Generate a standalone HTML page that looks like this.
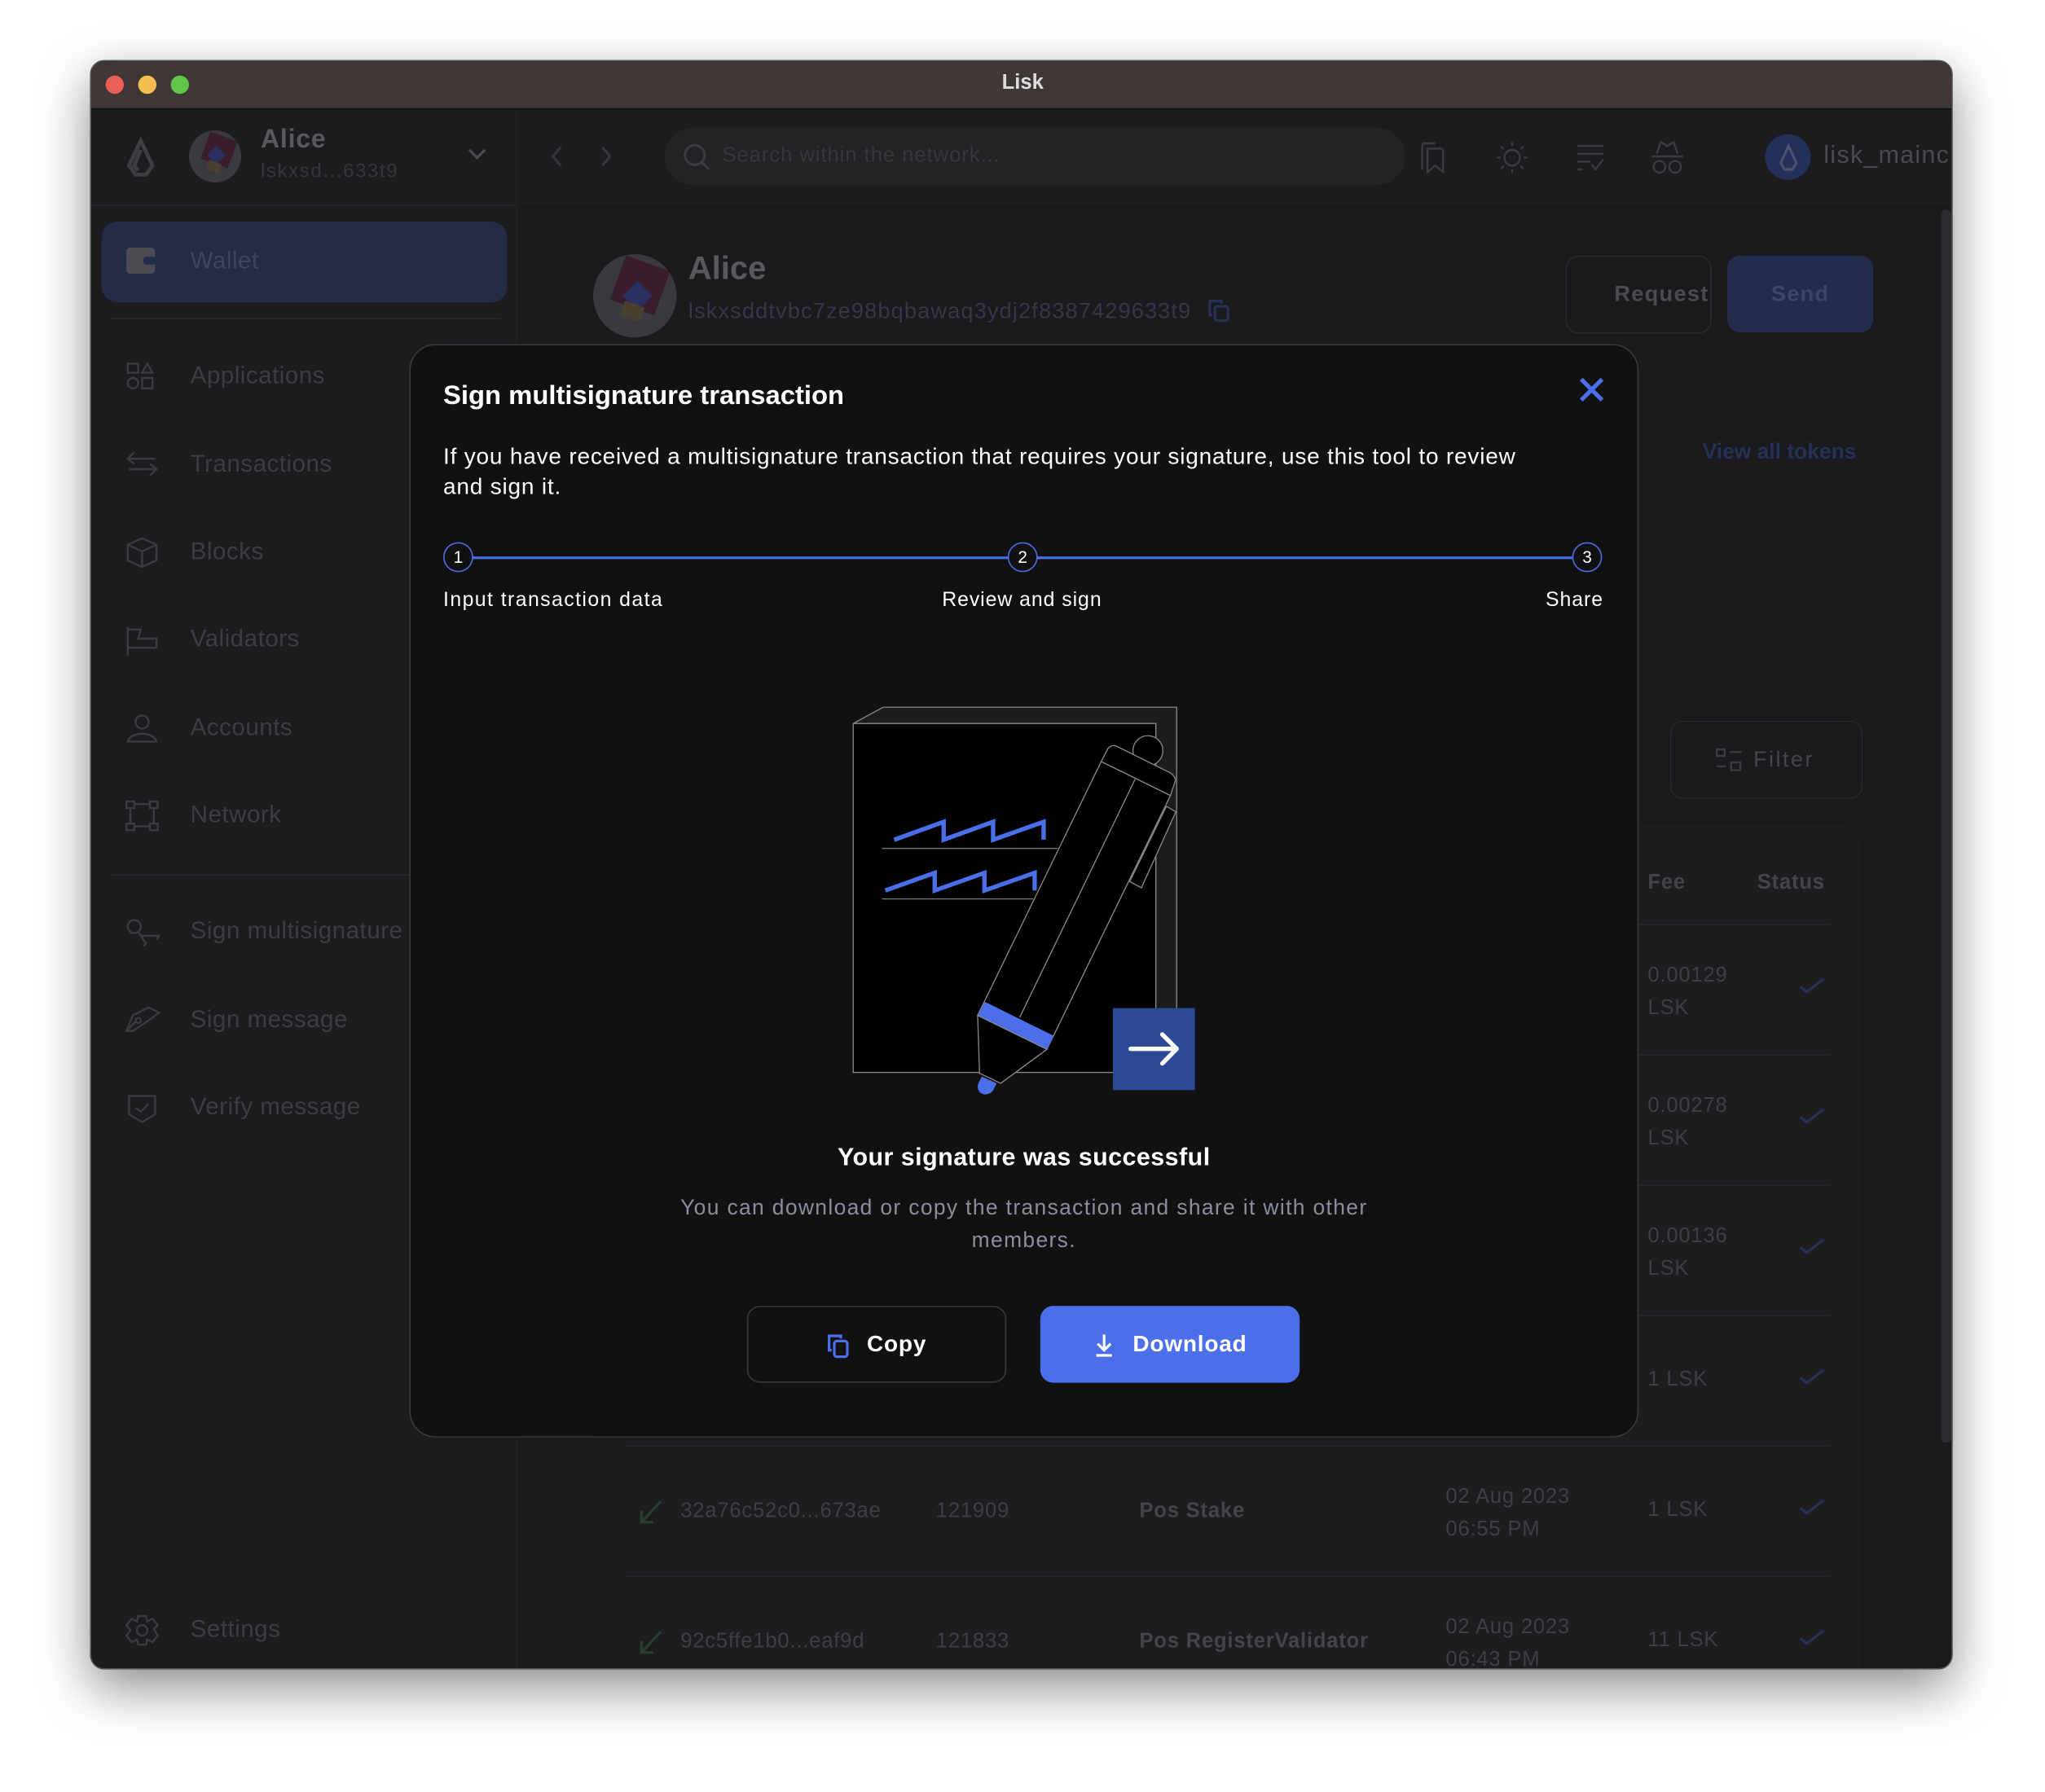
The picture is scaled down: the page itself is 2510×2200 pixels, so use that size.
<!DOCTYPE html>
<html><head><meta charset="utf-8"><style>
html,body{margin:0;padding:0;width:2510px;height:2200px;overflow:hidden;background:#fff;}
#s{position:absolute;left:0;top:0;width:1569px;height:1375px;transform:scale(1.6);transform-origin:0 0;font-family:"Liberation Sans",sans-serif;}
.a{position:absolute;white-space:nowrap;}
.win{position:absolute;left:69px;top:46px;width:1429px;height:1235px;border-radius:11px;overflow:hidden;background:#1a1a1d;box-shadow:0 14px 40px rgba(0,0,0,.45);border:1px solid #555;box-sizing:border-box;}
.nav{color:#3c3c42;font-size:18.5px;letter-spacing:.3px}
.ic{position:absolute;stroke:#3a3a40;fill:none;stroke-width:1.5}
.row{color:#3e3e44;font-size:16px;letter-spacing:.5px}
.div{position:absolute;height:1px;background:#26262a}
.chk{position:absolute;stroke:#263058;fill:none;stroke-width:2}
</style></head><body><div id="s">
<div class="win">
 <div class="a" style="left:0;top:0;width:1429px;height:36px;background:#3f3736;border-bottom:1px solid #111"></div>
 <div class="a" style="left:11px;top:11px;width:14px;height:14px;border-radius:50%;background:#ec5f57"></div>
 <div class="a" style="left:36px;top:11px;width:14px;height:14px;border-radius:50%;background:#f4bd4f"></div>
 <div class="a" style="left:61px;top:11px;width:14px;height:14px;border-radius:50%;background:#5fc64a"></div>
 <div class="a" style="left:0;width:1429px;top:8px;text-align:center;color:#ddd;font-weight:bold;font-size:16px">Lisk</div>
 <div class="a" style="left:0;top:37px;width:326px;height:1200px;background:#1c1c1f;border-right:1px solid #222"></div>
 <div class="a" style="left:0;top:110px;width:326px;height:1px;background:#25252a"></div>
 <svg class="ic" style="left:24px;top:58px" width="28" height="32" viewBox="0 0 28 32"><path d="M14 3 L5 22 L10 29 L18 29 L23 22 Z M14 10 L9 22 L12 26" stroke="#3d3d43" stroke-width="3"/></svg>
 <div class="a" style="left:75px;top:53px;width:40px;height:40px;border-radius:50%;background:#3a3a3e;overflow:hidden"><div style="position:absolute;left:12px;top:4px;width:22px;height:22px;background:#3a1d2c;transform:rotate(20deg)"></div><div style="position:absolute;left:16px;top:14px;width:10px;height:10px;background:#2a3062;transform:rotate(45deg)"></div><div style="position:absolute;left:14px;top:24px;width:10px;height:8px;background:#4a4030;transform:rotate(20deg)"></div></div>
 <div class="a" style="left:130px;top:49px;color:#58585e;font-size:20px;font-weight:bold;letter-spacing:.5px">Alice</div>
 <div class="a" style="left:130px;top:76px;color:#34343a;font-size:15px;letter-spacing:1px">lskxsd...633t9</div>
 <svg class="ic" style="left:288px;top:66px" width="16" height="10"><path d="M2 2 L8 8 L14 2" stroke="#4a4a50" stroke-width="2"/></svg>
 <div class="a" style="left:8px;top:123px;width:311px;height:62px;border-radius:12px;background:#242b47"></div>
 <div class="a" style="left:27px;top:143px;width:22px;height:20px;border-radius:3px;background:#4b4b52"></div>
 <div class="a" style="left:40px;top:150px;width:9px;height:6px;border-radius:2px;background:#242b47"></div>
 <div class="a nav" style="left:76px;top:142px;color:#3e4560">Wallet</div>
 <div class="a" style="left:14px;top:197px;width:300px;height:1px;background:#28282c"></div>
 <div class="a nav" style="left:76px;top:230px">Applications</div>
 <svg class="ic" style="left:27px;top:231px" width="22" height="22"><rect x="1" y="1" width="8" height="7"/><path d="M16 1 L20 8 L12 8 Z"/><circle cx="5" cy="16" r="4"/><rect x="12" y="12" width="8" height="8"/></svg>
 <div class="a nav" style="left:76px;top:298px">Transactions</div>
 <svg class="ic" style="left:26px;top:298px" width="26" height="22"><path d="M23 7 H3 M7 2 L2 7 L7 11 M3 15 H23 M19 11 L24 15 L19 20"/></svg>
 <div class="a nav" style="left:76px;top:365px">Blocks</div>
 <svg class="ic" style="left:26px;top:365px" width="26" height="24"><path d="M2 6 L13 1 L24 6 L24 18 L13 23 L2 18 Z M2 6 L13 11 L24 6 M13 11 V23"/></svg>
 <div class="a nav" style="left:76px;top:432px">Validators</div>
 <svg class="ic" style="left:26px;top:433px" width="26" height="24"><path d="M2 1 V23 M2 3 H12 L10 10 H24 V17 H2"/></svg>
 <div class="a nav" style="left:76px;top:500px">Accounts</div>
 <svg class="ic" style="left:26px;top:500px" width="26" height="24"><circle cx="13" cy="7" r="5"/><path d="M2 22 C4 14 22 14 24 22 Z"/></svg>
 <div class="a nav" style="left:76px;top:567px">Network</div>
 <svg class="ic" style="left:26px;top:567px" width="26" height="24"><rect x="1" y="1" width="6" height="5"/><rect x="19" y="1" width="6" height="5"/><rect x="1" y="18" width="6" height="5"/><rect x="19" y="18" width="6" height="5"/><path d="M7 3 H19 M7 20 H19 M4 6 V18 M22 6 V18"/></svg>
 <div class="a" style="left:14px;top:624px;width:300px;height:1px;background:#28282c"></div>
 <div class="a nav" style="left:76px;top:656px">Sign multisignature</div>
 <svg class="ic" style="left:26px;top:657px" width="28" height="24"><circle cx="7" cy="7" r="5"/><path d="M10 11 L16 20 L14 22 M12 14 L26 14 L24 17"/></svg>
 <div class="a nav" style="left:76px;top:724px">Sign message</div>
 <svg class="ic" style="left:26px;top:724px" width="28" height="22"><path d="M1 20 L6 8 L18 2 L26 6 L18 12 L6 20 Z M1 20 L8 13"/><circle cx="10" cy="12" r="2"/></svg>
 <div class="a nav" style="left:76px;top:791px">Verify message</div>
 <svg class="ic" style="left:27px;top:792px" width="24" height="24"><path d="M2 2 H22 V16 L12 22 L2 16 Z M7 11 L11 14 L17 8"/></svg>
 <div class="a nav" style="left:76px;top:1192px">Settings</div>
 <svg class="ic" style="left:26px;top:1192px" width="26" height="24"><circle cx="13" cy="12" r="4"/><path d="M10 1 H16 L17 5 L21 3 L25 8 L22 11 L25 16 L21 21 L17 19 L16 23 H10 L9 19 L5 21 L1 16 L4 12 L1 8 L5 3 L9 5 Z"/></svg>
 <div class="a" style="left:327px;top:37px;width:1102px;height:74px;background:#1c1c1f"></div>
 <svg class="ic" style="left:352px;top:64px" width="60" height="18"><path d="M8 2 L2 9 L8 16 M40 2 L46 9 L40 16" stroke="#36363c" stroke-width="2"/></svg>
 <div class="a" style="left:440px;top:51px;width:568px;height:44px;border-radius:22px;background:#232326"></div>
 <svg class="ic" style="left:454px;top:63px" width="22" height="22"><circle cx="9" cy="9" r="7.5" stroke="#3a3a40" stroke-width="2"/><path d="M14.5 14.5 L20 20" stroke="#3a3a40" stroke-width="2"/></svg>
 <div class="a" style="left:484px;top:64px;color:#36363c;font-size:16px;letter-spacing:.6px">Search within the network...</div>
 <svg class="ic" style="left:1018px;top:61px" width="24" height="26"><path d="M3 22 V4 Q3 2 5 2 H13 M7 6 H17 Q19 6 19 8 V24 L13 19 L7 24 Z"/></svg>
 <svg class="ic" style="left:1077px;top:61px" width="26" height="26"><circle cx="13" cy="13" r="6"/><path d="M13 1 V4 M13 22 V25 M1 13 H4 M22 13 H25 M4.5 4.5 L6.5 6.5 M19.5 19.5 L21.5 21.5 M4.5 21.5 L6.5 19.5 M19.5 6.5 L21.5 4.5"/></svg>
 <svg class="ic" style="left:1138px;top:63px" width="24" height="22"><path d="M2 2 H22 M2 8 H22 M2 14 H12 M2 20 H6 M13 16 L16 20 L22 12"/></svg>
 <svg class="ic" style="left:1196px;top:60px" width="26" height="28"><path d="M5 11 L8 2 L13 5 L18 2 L21 11 M1 13 H25"/><circle cx="7" cy="21" r="4.5"/><circle cx="19" cy="21" r="4.5"/></svg>
 <div class="a" style="left:1284px;top:56px;width:35px;height:35px;border-radius:50%;background:#243058"></div>
 <svg class="ic" style="left:1292px;top:63px" width="20" height="22"><path d="M10 2 L4 15 L7 20 L13 20 L16 15 Z" stroke="#4a5270" stroke-width="2"/></svg>
 <div class="a" style="left:1329px;top:62px;color:#4a4a50;font-size:19px;letter-spacing:.8px">lisk_mainchain</div>
 <div class="a" style="left:385px;top:148px;width:64px;height:64px;border-radius:50%;background:#3a3a3e;overflow:hidden"><div style="position:absolute;left:18px;top:6px;width:36px;height:36px;background:#3a1d2c;transform:rotate(20deg)"></div><div style="position:absolute;left:26px;top:24px;width:16px;height:16px;background:#2a3062;transform:rotate(45deg)"></div><div style="position:absolute;left:22px;top:38px;width:16px;height:12px;background:#4a4030;transform:rotate(20deg)"></div></div>
 <div class="a" style="left:458px;top:145px;color:#58585e;font-size:25px;font-weight:bold">Alice</div>
 <div class="a" style="left:458px;top:182px;color:#35364a;font-size:17px;letter-spacing:.7px">lskxsddtvbc7ze98bqbawaq3ydj2f8387429633t9</div>
 <svg class="ic" style="left:855px;top:181px" width="20" height="20"><path d="M5 14 H3 V3 H12 V5" stroke="#263058" stroke-width="2"/><rect x="7" y="7" width="10" height="11" rx="2" stroke="#263058" stroke-width="2"/></svg>
 <div class="a" style="left:1131px;top:149px;width:110px;height:58px;border:1.5px solid #2a2a2e;border-radius:10px"></div>
 <div class="a" style="left:1131px;top:169px;width:110px;text-align:right;color:#4a4a50;font-size:17px;font-weight:bold;letter-spacing:.8px">Request</div>
 <div class="a" style="left:1255px;top:149px;width:112px;height:59px;background:#232c4a;border-radius:10px"></div>
 <div class="a" style="left:1255px;top:169px;width:112px;text-align:center;color:#3b4669;font-size:17px;font-weight:bold;letter-spacing:.8px">Send</div>
 <div class="a" style="left:1236px;top:291px;color:#263056;font-size:16.5px;font-weight:bold">View all tokens</div>
 <div class="a" style="left:1211px;top:506px;width:146px;height:58px;border:1.5px solid #26262a;border-radius:10px"></div>
 <svg class="ic" style="left:1246px;top:527px" width="22" height="18"><rect x="1" y="1" width="6" height="5"/><path d="M11 3 H20 M1 14 H8"/><rect x="12" y="11" width="7" height="6"/></svg>
 <div class="a" style="left:1275px;top:526px;color:#45454b;font-size:17px;letter-spacing:1.5px">Filter</div>
 <div class="a" style="left:385px;top:586px;width:972px;height:700px;background:#1d1d20;border-radius:18px"></div>
 <div class="a row" style="left:1194px;top:622px;font-weight:bold;color:#44444a">Fee</div>
 <div class="a row" style="left:1278px;top:622px;font-weight:bold;color:#44444a">Status</div>
 <div class="div" style="left:410px;top:662px;width:924px"></div>
 <div class="div" style="left:410px;top:762px;width:924px"></div>
 <div class="div" style="left:410px;top:862px;width:924px"></div>
 <div class="div" style="left:410px;top:962px;width:924px"></div>
 <div class="div" style="left:410px;top:1062px;width:924px"></div>
 <div class="div" style="left:410px;top:1162px;width:924px"></div>
 <div class="a row" style="left:1194px;top:689px;line-height:25px">0.00129<br>LSK</div>
 <div class="a row" style="left:1194px;top:789px;line-height:25px">0.00278<br>LSK</div>
 <div class="a row" style="left:1194px;top:889px;line-height:25px">0.00136<br>LSK</div>
 <div class="a row" style="left:1194px;top:1003px">1 LSK</div>
 <div class="a row" style="left:1194px;top:1103px">1 LSK</div>
 <div class="a row" style="left:1194px;top:1203px">11 LSK</div>
 <svg class="chk" style="left:1310px;top:702px" width="20" height="14"><path d="M1 8 L6 12 L19 2"/></svg>
 <svg class="chk" style="left:1310px;top:802px" width="20" height="14"><path d="M1 8 L6 12 L19 2"/></svg>
 <svg class="chk" style="left:1310px;top:902px" width="20" height="14"><path d="M1 8 L6 12 L19 2"/></svg>
 <svg class="chk" style="left:1310px;top:1002px" width="20" height="14"><path d="M1 8 L6 12 L19 2"/></svg>
 <svg class="chk" style="left:1310px;top:1102px" width="20" height="14"><path d="M1 8 L6 12 L19 2"/></svg>
 <svg class="chk" style="left:1310px;top:1202px" width="20" height="14"><path d="M1 8 L6 12 L19 2"/></svg>
 <svg class="ic" style="left:419px;top:1103px" width="20" height="20"><path d="M18 2 L3 18 M3 9 V18 H12" stroke="#24402c" stroke-width="2"/></svg>
 <div class="a row" style="left:452px;top:1104px">32a76c52c0...673ae</div>
 <div class="a row" style="left:648px;top:1104px">121909</div>
 <div class="a row" style="left:804px;top:1104px;font-weight:bold;color:#44444a">Pos Stake</div>
 <div class="a row" style="left:1039px;top:1089px;line-height:25px">02 Aug 2023<br>06:55 PM</div>
 <svg class="ic" style="left:419px;top:1203px" width="20" height="20"><path d="M18 2 L3 18 M3 9 V18 H12" stroke="#24402c" stroke-width="2"/></svg>
 <div class="a row" style="left:452px;top:1204px">92c5ffe1b0...eaf9d</div>
 <div class="a row" style="left:648px;top:1204px">121833</div>
 <div class="a row" style="left:804px;top:1204px;font-weight:bold;color:#44444a">Pos RegisterValidator</div>
 <div class="a row" style="left:1039px;top:1189px;line-height:25px">02 Aug 2023<br>06:43 PM</div>
 <div class="a" style="left:1419px;top:114px;width:8px;height:946px;border-radius:4px;background:#2c2c30"></div>
 <div class="a" style="left:244px;top:217px;width:941px;height:837px;background:#111;border:1.5px solid #39393d;border-radius:20px"></div>
 <div class="a" style="left:270px;top:245px;color:#fff;font-size:20.5px;font-weight:bold">Sign multisignature transaction</div>
 <svg class="a" style="left:1141px;top:242px" width="20" height="20"><path d="M2 2 L18 18 M18 2 L2 18" stroke="#4a6fe8" stroke-width="3.2"/></svg>
 <div class="a" style="left:270px;top:292px;width:900px;white-space:nowrap;color:#fff;font-size:17.5px;line-height:23px;letter-spacing:.5px">If you have received a multisignature transaction that requires your signature, use this tool to review<br>and sign it.</div>
 <div class="a" style="left:282px;top:380px;width:866px;height:1.5px;background:#4a6fe8"></div>
 <div class="a" style="left:270px;top:369px;width:21px;height:21px;border:1.5px solid #4a6fe8;border-radius:50%;background:#111;color:#fff;font-size:13px;text-align:center;line-height:21px">1</div>
 <div class="a" style="left:703px;top:369px;width:21px;height:21px;border:1.5px solid #4a6fe8;border-radius:50%;background:#111;color:#fff;font-size:13px;text-align:center;line-height:21px">2</div>
 <div class="a" style="left:1136px;top:369px;width:21px;height:21px;border:1.5px solid #4a6fe8;border-radius:50%;background:#111;color:#fff;font-size:13px;text-align:center;line-height:21px">3</div>
 <div class="a" style="left:270px;top:405px;color:#fff;font-size:15.5px;letter-spacing:.9px">Input transaction data</div>
 <div class="a" style="left:614px;top:405px;width:200px;text-align:center;color:#fff;font-size:15.5px;letter-spacing:.6px">Review and sign</div>
 <div class="a" style="left:1060px;top:405px;width:100px;text-align:right;color:#fff;font-size:15.5px;letter-spacing:.6px">Share</div>
 <svg class="a" style="left:556px;top:479px" width="325" height="325" viewBox="0 0 1560 1560">
  <polygon points="137,140 247,80 1328,80 1328,1425 1251,1425 1251,140" fill="#1c1c1f" stroke="#888" stroke-width="4"/>
  <rect x="137" y="140" width="1114" height="1285" fill="#000" stroke="#888" stroke-width="4"/>
  <path d="M243 600 H890 M243 786 H800" stroke="#777" stroke-width="4"/>
  <path d="M288 568 L470 502 L470 568 L652 502 L652 568 L838 502 L838 568 M255 755 L437 690 L437 755 L620 690 L620 755 L805 690 L805 755" stroke="#4a6fe8" stroke-width="16" fill="none"/>
  <polygon points="1290,445 1325,465 1198,745 1155,722" fill="#000" stroke="#888" stroke-width="4"/>
  <circle cx="1222" cy="240" r="55" fill="#000" stroke="#888" stroke-width="4"/>
  <polygon points="1050,280 1305,405 850,1340 595,1215" fill="#000" stroke="#888" stroke-width="4"/>
  <path d="M1050 280 L1075 232 Q1090 215 1110 225 L1305 322 Q1330 340 1320 360 L1305 405 Z" fill="#000" stroke="#888" stroke-width="4"/>
  <path d="M1175 345 L750 1222" stroke="#888" stroke-width="4"/>
  <polygon points="622,1165 875,1290 850,1340 595,1215" fill="#4a6fe8"/>
  <path d="M610 1440 L665 1465 L652 1492 Q630 1515 605 1500 Q590 1485 598 1465 Z" fill="#4a6fe8"/>
  <polygon points="595,1215 850,1340 680,1465 602,1428" fill="#000" stroke="#888" stroke-width="4"/>
  <rect x="1093" y="1188" width="302" height="302" fill="#2c4a94"/>
  <path d="M1158 1338 H1328 M1275 1285 L1328 1338 L1275 1392" stroke="#fff" stroke-width="16" fill="none" stroke-linecap="round" stroke-linejoin="round"/>
 </svg>
 <div class="a" style="left:244px;top:831px;width:943px;text-align:center;color:#fff;font-size:19px;font-weight:bold;letter-spacing:.3px">Your signature was successful</div>
 <div class="a" style="left:414px;top:868px;width:603px;white-space:normal;text-align:center;color:#8a8ea0;font-size:16.5px;line-height:25px;letter-spacing:.85px">You can download or copy the transaction and share it with other members.</div>
 <div class="a" style="left:503px;top:955px;width:197px;height:57px;border:1.5px solid #3a3a3e;border-radius:10px"></div>
 <svg class="a" style="left:563px;top:975px" width="20" height="21"><path d="M5 14 H3 V3 H12 V5" stroke="#4a6fe8" stroke-width="2" fill="none"/><rect x="7" y="7" width="10" height="12" rx="2" stroke="#4a6fe8" stroke-width="2" fill="none"/></svg>
 <div class="a" style="left:595px;top:974px;color:#fff;font-size:17.5px;font-weight:bold;letter-spacing:.5px">Copy</div>
 <div class="a" style="left:728px;top:955px;width:199px;height:59px;background:#4a6fe8;border-radius:10px"></div>
 <svg class="a" style="left:768px;top:975px" width="18" height="20"><path d="M9 2 V14 M4 9 L9 14 L14 9 M3 18 H15" stroke="#fff" stroke-width="2" fill="none"/></svg>
 <div class="a" style="left:799px;top:974px;color:#fff;font-size:17.5px;font-weight:bold;letter-spacing:.5px">Download</div>
</div>
</div></body></html>
